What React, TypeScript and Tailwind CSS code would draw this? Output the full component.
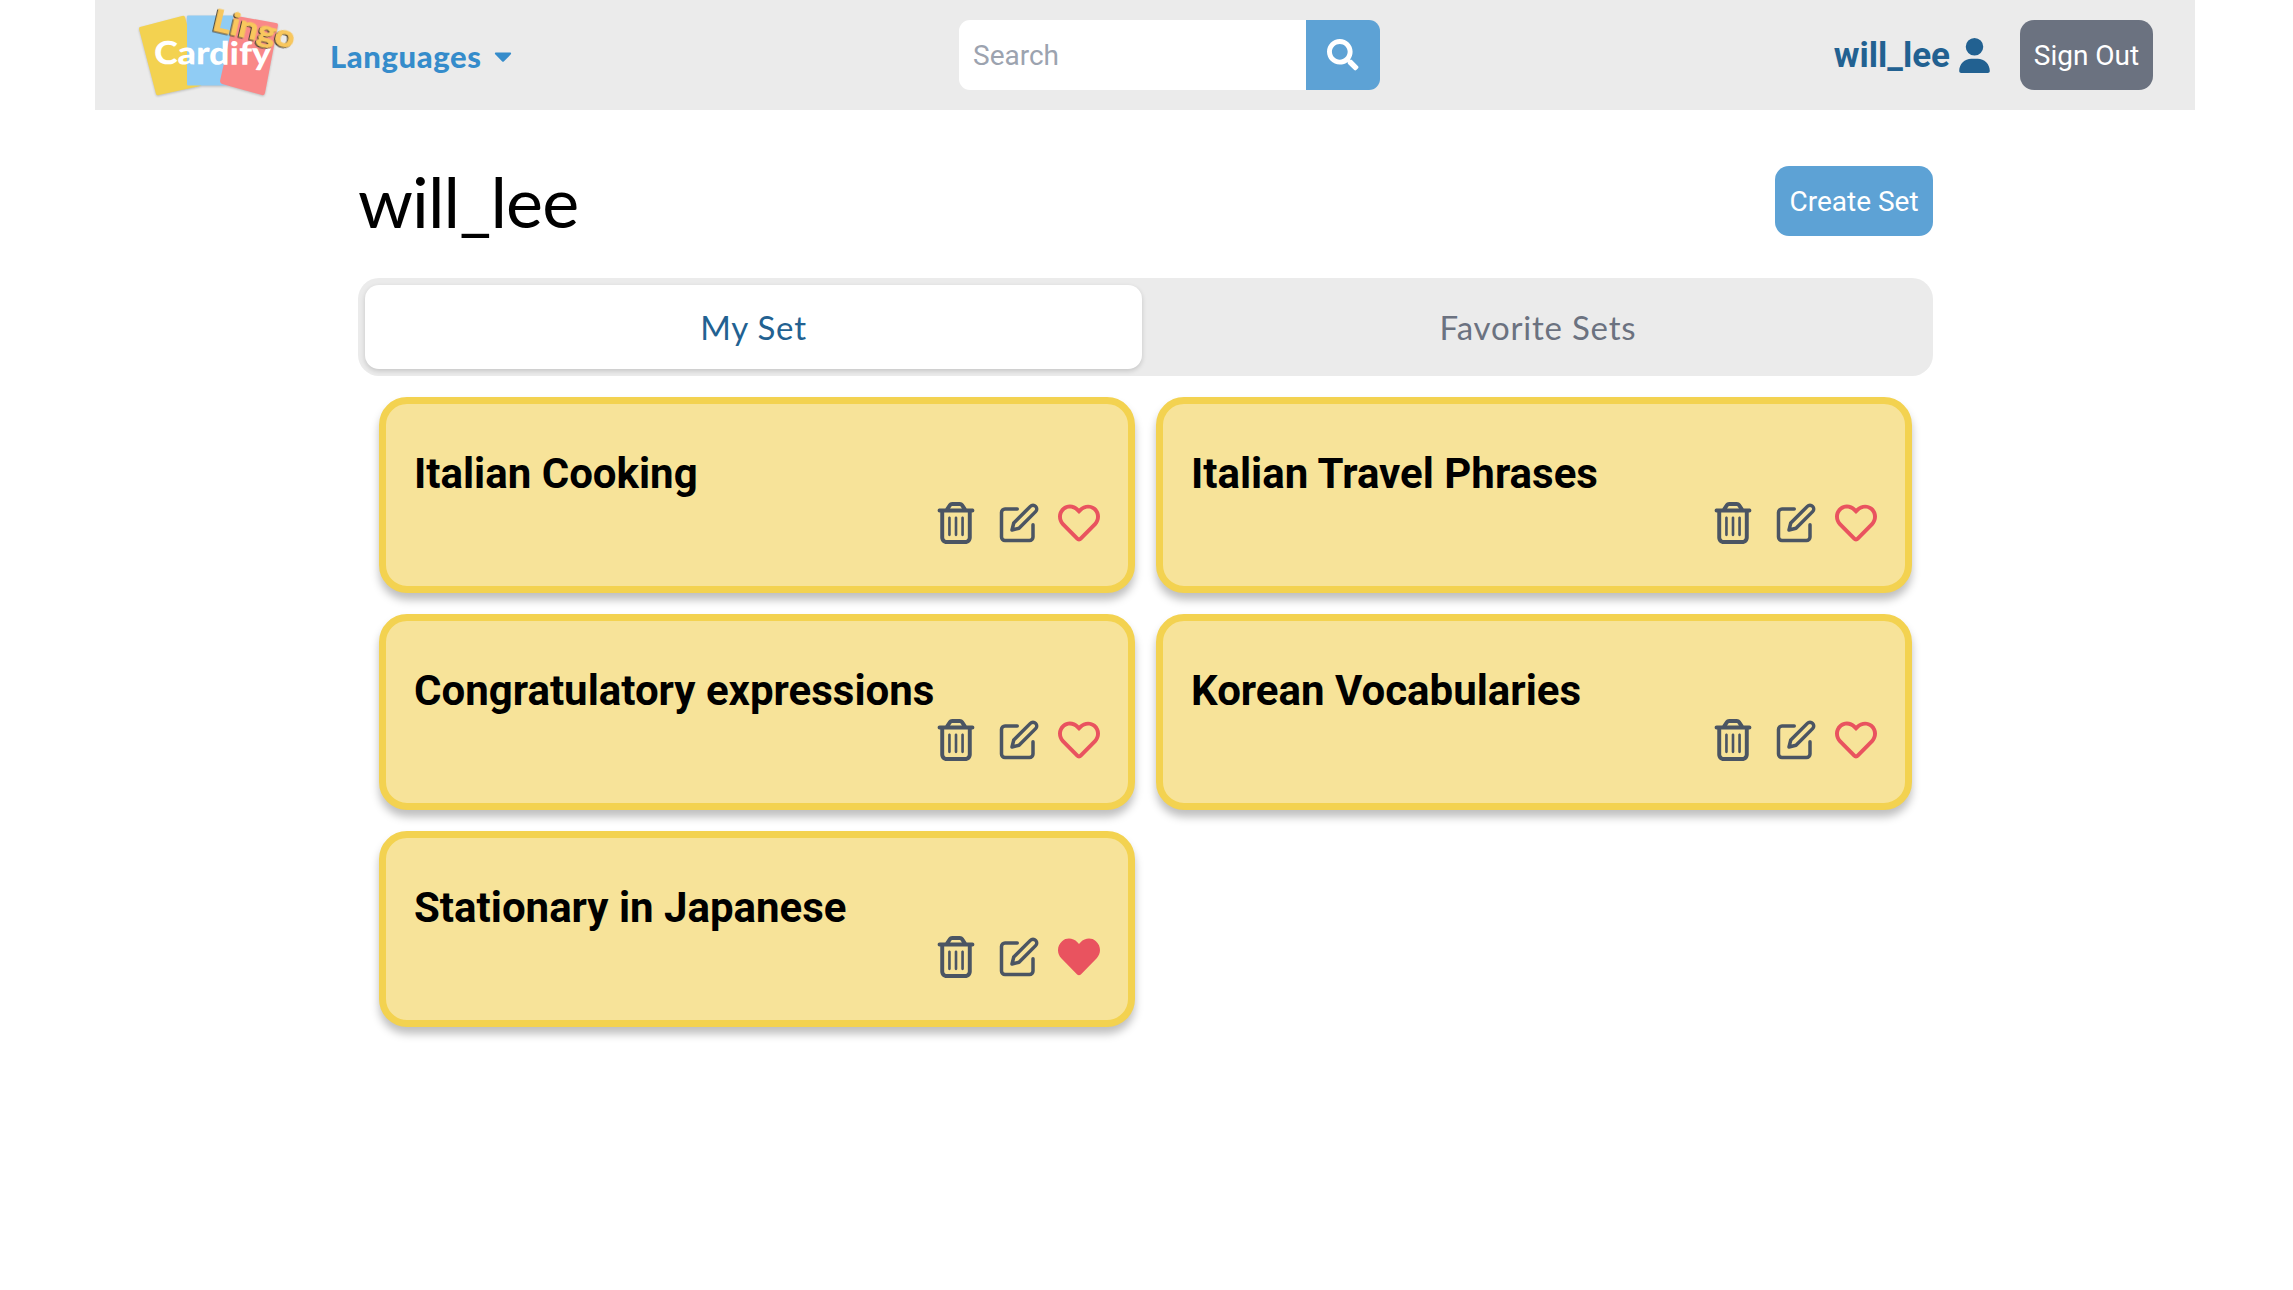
import React from "react";
import { FaSearch, FaCaretDown, FaRegHeart, FaHeart } from "react-icons/fa";
import { FaRegTrashCan, FaUser } from "react-icons/fa6";
import { FiEdit } from "react-icons/fi";

const sets = [
  { title: "Italian Cooking", liked: false },
  { title: "Italian Travel Phrases", liked: false },
  { title: "Congratulatory expressions", liked: false },
  { title: "Korean Vocabularies", liked: false },
  { title: "Stationary in Japanese", liked: true },
];

function Logo() {
  return (
    <svg width="164" height="100" viewBox="0 0 164 100" className="block shrink-0">
      <g style={{ filter: "drop-shadow(0 1px 1px rgba(0,0,0,.2))" }}>
        <path d="M4 27 46 16Q48 15 49 17L66 82Q66 85 64 86L23 95Q21 96 20 94L3 29Q3 27 4 27Z" fill="#f3d250" />
        <rect x="51" y="15.5" width="46" height="70" rx="1" fill="#90ccf4" />
        <path d="M101 16 140 23Q142 23 142 25L129 93Q128 96 126 95L86 84Q84 83 84 81L98 18Q99 16 101 16Z" fill="#f98888" />
      </g>
      <text x="18" y="64.5" textLength="117" lengthAdjust="spacingAndGlyphs" transform="rotate(0.5 76 60)" fontFamily="Lato" fontWeight="900" fontSize="32" fill="#fff">Cardify</text>
      <g transform="rotate(13 80 28)" style={{ filter: "drop-shadow(-1px 1px 0.6px #4a4033)" }}>
        <text x="76" y="31" textLength="83" lengthAdjust="spacingAndGlyphs" fontFamily="Lato" fontWeight="700" fontSize="31" fill="#f8c75e" stroke="#f8c75e" strokeWidth="1">Lingo</text>
      </g>
    </svg>
  );
}

function Card({ title, liked }: { title: string; liked: boolean }) {
  return (
    <article className="flex h-[196px] flex-col rounded-[28px] border-[7px] border-[#f3d250] bg-[#f7e399] px-7 pt-[42px] shadow-[0_7px_9px_rgba(0,0,0,0.25)]">
      <h2 className="text-[42px] leading-[56px] font-bold whitespace-nowrap text-black">{title}</h2>
      <div className="flex justify-end text-[#4b5563]">
        <FaRegTrashCan className="mr-[21px] size-[42px]" />
        <FiEdit className="mr-[18.5px] size-[42px]" />
        {liked ? <FaHeart className="size-[42px] text-[#e9535f]" /> : <FaRegHeart className="size-[42px] text-[#e9535f]" />}
      </div>
    </article>
  );
}

export default function App() {
  return (
    <div className="h-[1290px] overflow-hidden bg-white pl-[95px] font-['Roboto',sans-serif]">
      <nav className="flex h-[110px] w-[2100px] items-center bg-[#ebebeb]">
        <div className="-mt-[10px] ml-[41px] h-[100px]"><Logo /></div>
        <button className="ml-[30px] flex w-[187px] items-center justify-between pt-[2px] text-[#358ccb]">
          <span className="font-['Lato',sans-serif] text-[31px] leading-[42px] font-black tracking-[0.6px] whitespace-nowrap">Languages</span>
          <FaCaretDown className="size-[28px]" />
        </button>
        <form className="ml-[442px] flex h-[70px] w-[421px] overflow-hidden rounded-[11px]">
          <input placeholder="Search" className="w-[347px] bg-white px-[14px] pt-[2px] text-[28px] placeholder:text-[#9ca3af]" />
          <button type="button" className="flex flex-1 items-center justify-center bg-[#5da2d5] text-white">
            <FaSearch className="size-[31.5px]" />
          </button>
        </form>
        <div className="mr-[42px] ml-auto flex items-center">
          <span className="text-[35px] leading-[49px] font-bold text-[#226191]">will_lee</span>
          <FaUser className="mr-[28px] ml-[7px] size-[35px] text-[#226191]" />
          <button className="h-[70px] w-[133px] rounded-[14px] bg-[#6b7280] pt-[2px] text-[28px] whitespace-nowrap text-white">Sign Out</button>
        </div>
      </nav>
      <main className="ml-[263px] w-[1575px]">
        <header className="flex h-[168px] items-start justify-between pt-[56px]">
          <h1 className="-mt-[3px] font-['Lato',sans-serif] text-[70px] leading-[76px] tracking-[-0.9px] text-black">will_lee</h1>
          <button className="h-[70px] w-[158px] rounded-[14px] bg-[#5da2d5] pt-[2px] text-[28px] whitespace-nowrap text-white">Create Set</button>
        </header>
        <div className="flex h-[98px] rounded-[21px] bg-[#ebebeb] p-[7px] font-['Lato',sans-serif] text-[33px] tracking-[0.8px]">
          <button className="w-[777px] rounded-[14px] bg-white pt-[2px] text-[#226191] shadow-[0_2px_5px_rgba(0,0,0,0.16)]">My Set</button>
          <button className="flex-1 pt-[2px] pl-[8px] text-[#6b7280]">Favorite Sets</button>
        </div>
        <section className="grid grid-cols-2 gap-[21px] p-[21px]">
          {sets.map((s) => <Card key={s.title} title={s.title} liked={s.liked} />)}
        </section>
      </main>
    </div>
  );
}
